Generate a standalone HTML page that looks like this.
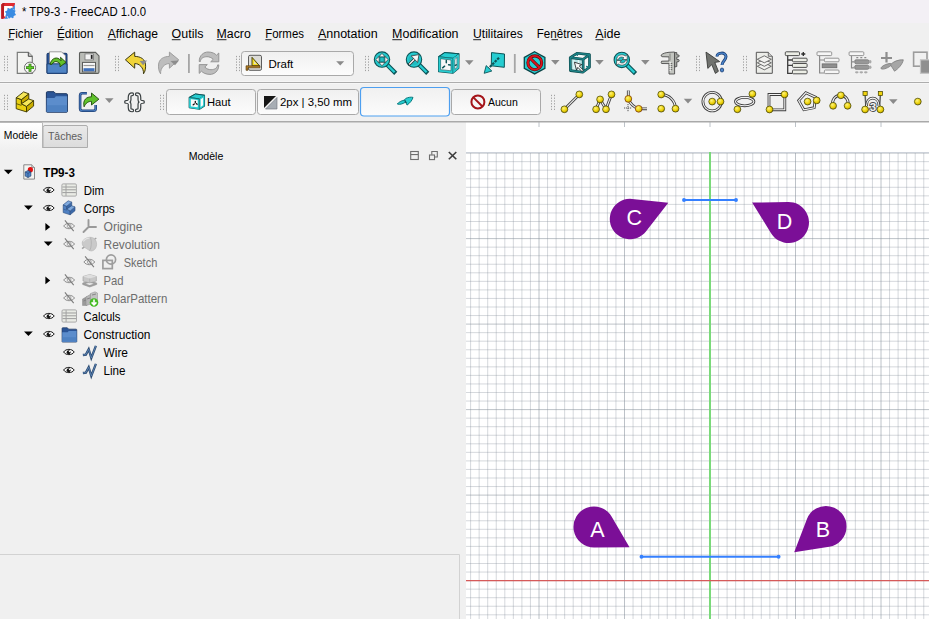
<!DOCTYPE html>
<html><head><meta charset="utf-8"><style>
html,body{margin:0;padding:0;background:#f0f0f0;overflow:hidden}
svg{display:block;font-family:"Liberation Sans", sans-serif}
</style></head><body>
<svg width="929" height="619" viewBox="0 0 929 619">
<rect x="0" y="0" width="929" height="619" fill="#f0f0f0"/><rect x="0" y="0" width="929" height="23" fill="#f3f0f5"/><rect x="466" y="122" width="463" height="497" fill="#ffffff"/><line x1="470.60" y1="152" x2="470.60" y2="619" stroke="#838c98" stroke-opacity="0.33" stroke-width="1"/><line x1="479.15" y1="152" x2="479.15" y2="619" stroke="#838c98" stroke-opacity="0.33" stroke-width="1"/><line x1="487.70" y1="152" x2="487.70" y2="619" stroke="#838c98" stroke-opacity="0.33" stroke-width="1"/><line x1="496.25" y1="152" x2="496.25" y2="619" stroke="#838c98" stroke-opacity="0.33" stroke-width="1"/><line x1="504.80" y1="152" x2="504.80" y2="619" stroke="#838c98" stroke-opacity="0.33" stroke-width="1"/><line x1="513.35" y1="152" x2="513.35" y2="619" stroke="#838c98" stroke-opacity="0.33" stroke-width="1"/><line x1="521.90" y1="152" x2="521.90" y2="619" stroke="#838c98" stroke-opacity="0.33" stroke-width="1"/><line x1="530.45" y1="152" x2="530.45" y2="619" stroke="#838c98" stroke-opacity="0.33" stroke-width="1"/><line x1="539.00" y1="152" x2="539.00" y2="619" stroke="#838c98" stroke-opacity="0.53" stroke-width="1"/><line x1="539.00" y1="122" x2="539.00" y2="127" stroke="#838c98" stroke-opacity="0.53" stroke-width="1"/><line x1="547.55" y1="152" x2="547.55" y2="619" stroke="#838c98" stroke-opacity="0.33" stroke-width="1"/><line x1="556.10" y1="152" x2="556.10" y2="619" stroke="#838c98" stroke-opacity="0.33" stroke-width="1"/><line x1="564.65" y1="152" x2="564.65" y2="619" stroke="#838c98" stroke-opacity="0.33" stroke-width="1"/><line x1="573.20" y1="152" x2="573.20" y2="619" stroke="#838c98" stroke-opacity="0.33" stroke-width="1"/><line x1="581.75" y1="152" x2="581.75" y2="619" stroke="#838c98" stroke-opacity="0.33" stroke-width="1"/><line x1="590.30" y1="152" x2="590.30" y2="619" stroke="#838c98" stroke-opacity="0.33" stroke-width="1"/><line x1="598.85" y1="152" x2="598.85" y2="619" stroke="#838c98" stroke-opacity="0.33" stroke-width="1"/><line x1="607.40" y1="152" x2="607.40" y2="619" stroke="#838c98" stroke-opacity="0.33" stroke-width="1"/><line x1="615.95" y1="152" x2="615.95" y2="619" stroke="#838c98" stroke-opacity="0.33" stroke-width="1"/><line x1="624.50" y1="152" x2="624.50" y2="619" stroke="#838c98" stroke-opacity="0.53" stroke-width="1"/><line x1="624.50" y1="122" x2="624.50" y2="127" stroke="#838c98" stroke-opacity="0.53" stroke-width="1"/><line x1="633.05" y1="152" x2="633.05" y2="619" stroke="#838c98" stroke-opacity="0.33" stroke-width="1"/><line x1="641.60" y1="152" x2="641.60" y2="619" stroke="#838c98" stroke-opacity="0.33" stroke-width="1"/><line x1="650.15" y1="152" x2="650.15" y2="619" stroke="#838c98" stroke-opacity="0.33" stroke-width="1"/><line x1="658.70" y1="152" x2="658.70" y2="619" stroke="#838c98" stroke-opacity="0.33" stroke-width="1"/><line x1="667.25" y1="152" x2="667.25" y2="619" stroke="#838c98" stroke-opacity="0.33" stroke-width="1"/><line x1="675.80" y1="152" x2="675.80" y2="619" stroke="#838c98" stroke-opacity="0.33" stroke-width="1"/><line x1="684.35" y1="152" x2="684.35" y2="619" stroke="#838c98" stroke-opacity="0.33" stroke-width="1"/><line x1="692.90" y1="152" x2="692.90" y2="619" stroke="#838c98" stroke-opacity="0.33" stroke-width="1"/><line x1="701.45" y1="152" x2="701.45" y2="619" stroke="#838c98" stroke-opacity="0.33" stroke-width="1"/><line x1="710.00" y1="152" x2="710.00" y2="619" stroke="#838c98" stroke-opacity="0.53" stroke-width="1"/><line x1="710.00" y1="122" x2="710.00" y2="127" stroke="#838c98" stroke-opacity="0.53" stroke-width="1"/><line x1="718.55" y1="152" x2="718.55" y2="619" stroke="#838c98" stroke-opacity="0.33" stroke-width="1"/><line x1="727.10" y1="152" x2="727.10" y2="619" stroke="#838c98" stroke-opacity="0.33" stroke-width="1"/><line x1="735.65" y1="152" x2="735.65" y2="619" stroke="#838c98" stroke-opacity="0.33" stroke-width="1"/><line x1="744.20" y1="152" x2="744.20" y2="619" stroke="#838c98" stroke-opacity="0.33" stroke-width="1"/><line x1="752.75" y1="152" x2="752.75" y2="619" stroke="#838c98" stroke-opacity="0.33" stroke-width="1"/><line x1="761.30" y1="152" x2="761.30" y2="619" stroke="#838c98" stroke-opacity="0.33" stroke-width="1"/><line x1="769.85" y1="152" x2="769.85" y2="619" stroke="#838c98" stroke-opacity="0.33" stroke-width="1"/><line x1="778.40" y1="152" x2="778.40" y2="619" stroke="#838c98" stroke-opacity="0.33" stroke-width="1"/><line x1="786.95" y1="152" x2="786.95" y2="619" stroke="#838c98" stroke-opacity="0.33" stroke-width="1"/><line x1="795.50" y1="152" x2="795.50" y2="619" stroke="#838c98" stroke-opacity="0.53" stroke-width="1"/><line x1="795.50" y1="122" x2="795.50" y2="127" stroke="#838c98" stroke-opacity="0.53" stroke-width="1"/><line x1="804.05" y1="152" x2="804.05" y2="619" stroke="#838c98" stroke-opacity="0.33" stroke-width="1"/><line x1="812.60" y1="152" x2="812.60" y2="619" stroke="#838c98" stroke-opacity="0.33" stroke-width="1"/><line x1="821.15" y1="152" x2="821.15" y2="619" stroke="#838c98" stroke-opacity="0.33" stroke-width="1"/><line x1="829.70" y1="152" x2="829.70" y2="619" stroke="#838c98" stroke-opacity="0.33" stroke-width="1"/><line x1="838.25" y1="152" x2="838.25" y2="619" stroke="#838c98" stroke-opacity="0.33" stroke-width="1"/><line x1="846.80" y1="152" x2="846.80" y2="619" stroke="#838c98" stroke-opacity="0.33" stroke-width="1"/><line x1="855.35" y1="152" x2="855.35" y2="619" stroke="#838c98" stroke-opacity="0.33" stroke-width="1"/><line x1="863.90" y1="152" x2="863.90" y2="619" stroke="#838c98" stroke-opacity="0.33" stroke-width="1"/><line x1="872.45" y1="152" x2="872.45" y2="619" stroke="#838c98" stroke-opacity="0.33" stroke-width="1"/><line x1="881.00" y1="152" x2="881.00" y2="619" stroke="#838c98" stroke-opacity="0.53" stroke-width="1"/><line x1="881.00" y1="122" x2="881.00" y2="127" stroke="#838c98" stroke-opacity="0.53" stroke-width="1"/><line x1="889.55" y1="152" x2="889.55" y2="619" stroke="#838c98" stroke-opacity="0.33" stroke-width="1"/><line x1="898.10" y1="152" x2="898.10" y2="619" stroke="#838c98" stroke-opacity="0.33" stroke-width="1"/><line x1="906.65" y1="152" x2="906.65" y2="619" stroke="#838c98" stroke-opacity="0.33" stroke-width="1"/><line x1="915.20" y1="152" x2="915.20" y2="619" stroke="#838c98" stroke-opacity="0.33" stroke-width="1"/><line x1="923.75" y1="152" x2="923.75" y2="619" stroke="#838c98" stroke-opacity="0.33" stroke-width="1"/><line x1="466" y1="153.10" x2="929" y2="153.10" stroke="#838c98" stroke-opacity="0.53" stroke-width="1"/><line x1="466" y1="161.65" x2="929" y2="161.65" stroke="#838c98" stroke-opacity="0.33" stroke-width="1"/><line x1="466" y1="170.20" x2="929" y2="170.20" stroke="#838c98" stroke-opacity="0.33" stroke-width="1"/><line x1="466" y1="178.75" x2="929" y2="178.75" stroke="#838c98" stroke-opacity="0.33" stroke-width="1"/><line x1="466" y1="187.30" x2="929" y2="187.30" stroke="#838c98" stroke-opacity="0.33" stroke-width="1"/><line x1="466" y1="195.85" x2="929" y2="195.85" stroke="#838c98" stroke-opacity="0.33" stroke-width="1"/><line x1="466" y1="204.40" x2="929" y2="204.40" stroke="#838c98" stroke-opacity="0.33" stroke-width="1"/><line x1="466" y1="212.95" x2="929" y2="212.95" stroke="#838c98" stroke-opacity="0.33" stroke-width="1"/><line x1="466" y1="221.50" x2="929" y2="221.50" stroke="#838c98" stroke-opacity="0.33" stroke-width="1"/><line x1="466" y1="230.05" x2="929" y2="230.05" stroke="#838c98" stroke-opacity="0.33" stroke-width="1"/><line x1="466" y1="238.60" x2="929" y2="238.60" stroke="#838c98" stroke-opacity="0.53" stroke-width="1"/><line x1="466" y1="247.15" x2="929" y2="247.15" stroke="#838c98" stroke-opacity="0.33" stroke-width="1"/><line x1="466" y1="255.70" x2="929" y2="255.70" stroke="#838c98" stroke-opacity="0.33" stroke-width="1"/><line x1="466" y1="264.25" x2="929" y2="264.25" stroke="#838c98" stroke-opacity="0.33" stroke-width="1"/><line x1="466" y1="272.80" x2="929" y2="272.80" stroke="#838c98" stroke-opacity="0.33" stroke-width="1"/><line x1="466" y1="281.35" x2="929" y2="281.35" stroke="#838c98" stroke-opacity="0.33" stroke-width="1"/><line x1="466" y1="289.90" x2="929" y2="289.90" stroke="#838c98" stroke-opacity="0.33" stroke-width="1"/><line x1="466" y1="298.45" x2="929" y2="298.45" stroke="#838c98" stroke-opacity="0.33" stroke-width="1"/><line x1="466" y1="307.00" x2="929" y2="307.00" stroke="#838c98" stroke-opacity="0.33" stroke-width="1"/><line x1="466" y1="315.55" x2="929" y2="315.55" stroke="#838c98" stroke-opacity="0.33" stroke-width="1"/><line x1="466" y1="324.10" x2="929" y2="324.10" stroke="#838c98" stroke-opacity="0.53" stroke-width="1"/><line x1="466" y1="332.65" x2="929" y2="332.65" stroke="#838c98" stroke-opacity="0.33" stroke-width="1"/><line x1="466" y1="341.20" x2="929" y2="341.20" stroke="#838c98" stroke-opacity="0.33" stroke-width="1"/><line x1="466" y1="349.75" x2="929" y2="349.75" stroke="#838c98" stroke-opacity="0.33" stroke-width="1"/><line x1="466" y1="358.30" x2="929" y2="358.30" stroke="#838c98" stroke-opacity="0.33" stroke-width="1"/><line x1="466" y1="366.85" x2="929" y2="366.85" stroke="#838c98" stroke-opacity="0.33" stroke-width="1"/><line x1="466" y1="375.40" x2="929" y2="375.40" stroke="#838c98" stroke-opacity="0.33" stroke-width="1"/><line x1="466" y1="383.95" x2="929" y2="383.95" stroke="#838c98" stroke-opacity="0.33" stroke-width="1"/><line x1="466" y1="392.50" x2="929" y2="392.50" stroke="#838c98" stroke-opacity="0.33" stroke-width="1"/><line x1="466" y1="401.05" x2="929" y2="401.05" stroke="#838c98" stroke-opacity="0.33" stroke-width="1"/><line x1="466" y1="409.60" x2="929" y2="409.60" stroke="#838c98" stroke-opacity="0.53" stroke-width="1"/><line x1="466" y1="418.15" x2="929" y2="418.15" stroke="#838c98" stroke-opacity="0.33" stroke-width="1"/><line x1="466" y1="426.70" x2="929" y2="426.70" stroke="#838c98" stroke-opacity="0.33" stroke-width="1"/><line x1="466" y1="435.25" x2="929" y2="435.25" stroke="#838c98" stroke-opacity="0.33" stroke-width="1"/><line x1="466" y1="443.80" x2="929" y2="443.80" stroke="#838c98" stroke-opacity="0.33" stroke-width="1"/><line x1="466" y1="452.35" x2="929" y2="452.35" stroke="#838c98" stroke-opacity="0.33" stroke-width="1"/><line x1="466" y1="460.90" x2="929" y2="460.90" stroke="#838c98" stroke-opacity="0.33" stroke-width="1"/><line x1="466" y1="469.45" x2="929" y2="469.45" stroke="#838c98" stroke-opacity="0.33" stroke-width="1"/><line x1="466" y1="478.00" x2="929" y2="478.00" stroke="#838c98" stroke-opacity="0.33" stroke-width="1"/><line x1="466" y1="486.55" x2="929" y2="486.55" stroke="#838c98" stroke-opacity="0.33" stroke-width="1"/><line x1="466" y1="495.10" x2="929" y2="495.10" stroke="#838c98" stroke-opacity="0.53" stroke-width="1"/><line x1="466" y1="503.65" x2="929" y2="503.65" stroke="#838c98" stroke-opacity="0.33" stroke-width="1"/><line x1="466" y1="512.20" x2="929" y2="512.20" stroke="#838c98" stroke-opacity="0.33" stroke-width="1"/><line x1="466" y1="520.75" x2="929" y2="520.75" stroke="#838c98" stroke-opacity="0.33" stroke-width="1"/><line x1="466" y1="529.30" x2="929" y2="529.30" stroke="#838c98" stroke-opacity="0.33" stroke-width="1"/><line x1="466" y1="537.85" x2="929" y2="537.85" stroke="#838c98" stroke-opacity="0.33" stroke-width="1"/><line x1="466" y1="546.40" x2="929" y2="546.40" stroke="#838c98" stroke-opacity="0.33" stroke-width="1"/><line x1="466" y1="554.95" x2="929" y2="554.95" stroke="#838c98" stroke-opacity="0.33" stroke-width="1"/><line x1="466" y1="563.50" x2="929" y2="563.50" stroke="#838c98" stroke-opacity="0.33" stroke-width="1"/><line x1="466" y1="572.05" x2="929" y2="572.05" stroke="#838c98" stroke-opacity="0.33" stroke-width="1"/><line x1="466" y1="580.60" x2="929" y2="580.60" stroke="#838c98" stroke-opacity="0.53" stroke-width="1"/><line x1="466" y1="589.15" x2="929" y2="589.15" stroke="#838c98" stroke-opacity="0.33" stroke-width="1"/><line x1="466" y1="597.70" x2="929" y2="597.70" stroke="#838c98" stroke-opacity="0.33" stroke-width="1"/><line x1="466" y1="606.25" x2="929" y2="606.25" stroke="#838c98" stroke-opacity="0.33" stroke-width="1"/><line x1="466" y1="614.80" x2="929" y2="614.80" stroke="#838c98" stroke-opacity="0.33" stroke-width="1"/><line x1="466" y1="152.5" x2="929" y2="152.5" stroke="#ccd1d9" stroke-width="1"/><line x1="710.0" y1="152" x2="710.0" y2="619" stroke="#7ad97a" stroke-width="2"/><line x1="466" y1="580.6" x2="929" y2="580.6" stroke="#d65a5a" stroke-width="1.3"/><line x1="684" y1="200.0" x2="736" y2="200.0" stroke="#3580ff" stroke-width="2.1"/><circle cx="684" cy="200.0" r="1.95" fill="#3580ff"/><circle cx="736" cy="200.0" r="1.95" fill="#3580ff"/><line x1="641.5" y1="556.8" x2="778.6" y2="556.8" stroke="#3580ff" stroke-width="2.1"/><circle cx="641.5" cy="556.8" r="1.95" fill="#3580ff"/><circle cx="778.6" cy="556.8" r="1.95" fill="#3580ff"/><path d="M668.30,202.70 L645.94,231.41 A20.2,20.2 0 1 1 632.10,198.91 Z" fill="#7b0f97"/><path d="M752.10,202.60 L788.16,202.00 A20.5,20.5 0 1 1 771.06,233.28 Z" fill="#7b0f97"/><path d="M629.50,547.20 L594.17,547.50 A20.5,20.5 0 1 1 611.71,516.68 Z" fill="#7b0f97"/><path d="M794.20,552.20 L806.86,519.17 A20.5,20.5 0 1 1 829.15,546.76 Z" fill="#7b0f97"/><text x="634.2" y="225.2" font-size="21.5" fill="#ffffff" font-weight="normal" text-anchor="middle" >C</text><text x="784.6" y="229" font-size="21.5" fill="#ffffff" font-weight="normal" text-anchor="middle" >D</text><text x="597.5" y="537" font-size="21.5" fill="#ffffff" font-weight="normal" text-anchor="middle" >A</text><text x="823" y="537" font-size="21.5" fill="#ffffff" font-weight="normal" text-anchor="middle" >B</text><rect x="0" y="81" width="929" height="1" fill="#f6f6f6"/><rect x="0" y="82" width="929" height="1" fill="#adadad"/><rect x="0" y="83" width="929" height="1" fill="#f6f6f6"/><rect x="0" y="121" width="929" height="1.5" fill="#a9a9a9"/><text x="22" y="16.1" font-size="12" fill="#000" font-weight="normal" text-anchor="start" textLength="124" lengthAdjust="spacingAndGlyphs" >* TP9-3 - FreeCAD 1.0.0</text><text x="8.200000000000001" y="38.0" font-size="12.3" fill="#000" font-weight="normal" text-anchor="start" textLength="34.8" lengthAdjust="spacingAndGlyphs" >Fichier</text><text x="56.9" y="38.0" font-size="12.3" fill="#000" font-weight="normal" text-anchor="start" textLength="36.5" lengthAdjust="spacingAndGlyphs" >Édition</text><text x="107.7" y="38.0" font-size="12.3" fill="#000" font-weight="normal" text-anchor="start" textLength="50.2" lengthAdjust="spacingAndGlyphs" >Affichage</text><text x="171.6" y="38.0" font-size="12.3" fill="#000" font-weight="normal" text-anchor="start" textLength="31.8" lengthAdjust="spacingAndGlyphs" >Outils</text><text x="216.6" y="38.0" font-size="12.3" fill="#000" font-weight="normal" text-anchor="start" textLength="34.2" lengthAdjust="spacingAndGlyphs" >Macro</text><text x="265.2" y="38.0" font-size="12.3" fill="#000" font-weight="normal" text-anchor="start" textLength="38.8" lengthAdjust="spacingAndGlyphs" >Formes</text><text x="318.0" y="38.0" font-size="12.3" fill="#000" font-weight="normal" text-anchor="start" textLength="59.6" lengthAdjust="spacingAndGlyphs" >Annotation</text><text x="392.09999999999997" y="38.0" font-size="12.3" fill="#000" font-weight="normal" text-anchor="start" textLength="66.4" lengthAdjust="spacingAndGlyphs" >Modification</text><text x="473.0" y="38.0" font-size="12.3" fill="#000" font-weight="normal" text-anchor="start" textLength="49.9" lengthAdjust="spacingAndGlyphs" >Utilitaires</text><text x="536.8" y="38.0" font-size="12.3" fill="#000" font-weight="normal" text-anchor="start" textLength="45.7" lengthAdjust="spacingAndGlyphs" >Fenêtres</text><text x="595.3" y="38.0" font-size="12.3" fill="#000" font-weight="normal" text-anchor="start" textLength="25.1" lengthAdjust="spacingAndGlyphs" >Aide</text><rect x="7.9" y="39.2" width="6.1" height="1" fill="#222"/><rect x="57.2" y="39.2" width="6.3" height="1" fill="#222"/><rect x="107.9" y="39.2" width="8.1" height="1" fill="#222"/><rect x="171.8" y="39.2" width="8.7" height="1" fill="#222"/><rect x="216.8" y="39.2" width="9.7" height="1" fill="#222"/><rect x="265.4" y="39.2" width="6.1" height="1" fill="#222"/><rect x="318.2" y="39.2" width="8.3" height="1" fill="#222"/><rect x="392.3" y="39.2" width="9.7" height="1" fill="#222"/><rect x="473.2" y="39.2" width="7.8" height="1" fill="#222"/><rect x="551.5" y="39.2" width="6.5" height="1" fill="#222"/><rect x="595.5" y="39.2" width="8.0" height="1" fill="#222"/><defs><radialGradient id="ydot" cx="0.4" cy="0.35" r="0.7"><stop offset="0" stop-color="#fff27a"/><stop offset="0.6" stop-color="#ecd20a"/><stop offset="1" stop-color="#b89c00"/></radialGradient></defs><g><path d="M1.3,18.7 V4.6 L3,2.9 H14.9 V5 L12.6,8.2 H4.1 V16.3 L6.2,16.3 L4.2,18.7 Z" fill="#e02a31"/><path d="M1.3,18.7 V4.6 L3,2.9 H5 L4.1,4.6 V16.3 L3,18.7 Z" fill="#b71c22"/><path d="M4.1,5.9 H12.6 V8.3 H7 V10.3 H9.2 V12.4 H7 V16.3 H4.1 Z" fill="#ffffff"/><path d="M14.9,4.6 V10 L11.5,9 L12.6,8.2 Z M4.2,18.7 L6.6,15.8 L8,18.7 Z" fill="#3a8be2"/><path d="M11.59,7.81 L12.62,8.13 L12.96,9.55 L13.62,10.10 L15.08,10.16 L15.59,11.11 L14.82,12.36 L14.90,13.22 L15.89,14.29 L15.57,15.32 L14.15,15.66 L13.60,16.32 L13.54,17.78 L12.59,18.29 L11.34,17.52 L10.48,17.60 L9.41,18.59 L8.38,18.27 L8.04,16.85 L7.38,16.30 L5.92,16.24 L5.41,15.29 L6.18,14.04 L6.10,13.18 L5.11,12.11 L5.43,11.08 L6.85,10.74 L7.40,10.08 L7.46,8.62 L8.41,8.11 L9.66,8.88 L10.52,8.80 Z" fill="#3a8be2"/></g><rect x="4" y="55.90" width="1" height="1.3" fill="#a2a2a2"/><rect x="7" y="55.90" width="1" height="1.3" fill="#a2a2a2"/><rect x="4" y="58.68" width="1" height="1.3" fill="#a2a2a2"/><rect x="7" y="58.68" width="1" height="1.3" fill="#a2a2a2"/><rect x="4" y="61.46" width="1" height="1.3" fill="#a2a2a2"/><rect x="7" y="61.46" width="1" height="1.3" fill="#a2a2a2"/><rect x="4" y="64.24" width="1" height="1.3" fill="#a2a2a2"/><rect x="7" y="64.24" width="1" height="1.3" fill="#a2a2a2"/><rect x="4" y="67.02" width="1" height="1.3" fill="#a2a2a2"/><rect x="7" y="67.02" width="1" height="1.3" fill="#a2a2a2"/><rect x="4" y="69.80" width="1" height="1.3" fill="#a2a2a2"/><rect x="7" y="69.80" width="1" height="1.3" fill="#a2a2a2"/><rect x="115" y="55.90" width="1" height="1.3" fill="#a2a2a2"/><rect x="118" y="55.90" width="1" height="1.3" fill="#a2a2a2"/><rect x="115" y="58.68" width="1" height="1.3" fill="#a2a2a2"/><rect x="118" y="58.68" width="1" height="1.3" fill="#a2a2a2"/><rect x="115" y="61.46" width="1" height="1.3" fill="#a2a2a2"/><rect x="118" y="61.46" width="1" height="1.3" fill="#a2a2a2"/><rect x="115" y="64.24" width="1" height="1.3" fill="#a2a2a2"/><rect x="118" y="64.24" width="1" height="1.3" fill="#a2a2a2"/><rect x="115" y="67.02" width="1" height="1.3" fill="#a2a2a2"/><rect x="118" y="67.02" width="1" height="1.3" fill="#a2a2a2"/><rect x="115" y="69.80" width="1" height="1.3" fill="#a2a2a2"/><rect x="118" y="69.80" width="1" height="1.3" fill="#a2a2a2"/><rect x="236" y="55.90" width="1" height="1.3" fill="#a2a2a2"/><rect x="239" y="55.90" width="1" height="1.3" fill="#a2a2a2"/><rect x="236" y="58.68" width="1" height="1.3" fill="#a2a2a2"/><rect x="239" y="58.68" width="1" height="1.3" fill="#a2a2a2"/><rect x="236" y="61.46" width="1" height="1.3" fill="#a2a2a2"/><rect x="239" y="61.46" width="1" height="1.3" fill="#a2a2a2"/><rect x="236" y="64.24" width="1" height="1.3" fill="#a2a2a2"/><rect x="239" y="64.24" width="1" height="1.3" fill="#a2a2a2"/><rect x="236" y="67.02" width="1" height="1.3" fill="#a2a2a2"/><rect x="239" y="67.02" width="1" height="1.3" fill="#a2a2a2"/><rect x="236" y="69.80" width="1" height="1.3" fill="#a2a2a2"/><rect x="239" y="69.80" width="1" height="1.3" fill="#a2a2a2"/><rect x="365" y="55.90" width="1" height="1.3" fill="#a2a2a2"/><rect x="368" y="55.90" width="1" height="1.3" fill="#a2a2a2"/><rect x="365" y="58.68" width="1" height="1.3" fill="#a2a2a2"/><rect x="368" y="58.68" width="1" height="1.3" fill="#a2a2a2"/><rect x="365" y="61.46" width="1" height="1.3" fill="#a2a2a2"/><rect x="368" y="61.46" width="1" height="1.3" fill="#a2a2a2"/><rect x="365" y="64.24" width="1" height="1.3" fill="#a2a2a2"/><rect x="368" y="64.24" width="1" height="1.3" fill="#a2a2a2"/><rect x="365" y="67.02" width="1" height="1.3" fill="#a2a2a2"/><rect x="368" y="67.02" width="1" height="1.3" fill="#a2a2a2"/><rect x="365" y="69.80" width="1" height="1.3" fill="#a2a2a2"/><rect x="368" y="69.80" width="1" height="1.3" fill="#a2a2a2"/><rect x="696" y="55.90" width="1" height="1.3" fill="#a2a2a2"/><rect x="699" y="55.90" width="1" height="1.3" fill="#a2a2a2"/><rect x="696" y="58.68" width="1" height="1.3" fill="#a2a2a2"/><rect x="699" y="58.68" width="1" height="1.3" fill="#a2a2a2"/><rect x="696" y="61.46" width="1" height="1.3" fill="#a2a2a2"/><rect x="699" y="61.46" width="1" height="1.3" fill="#a2a2a2"/><rect x="696" y="64.24" width="1" height="1.3" fill="#a2a2a2"/><rect x="699" y="64.24" width="1" height="1.3" fill="#a2a2a2"/><rect x="696" y="67.02" width="1" height="1.3" fill="#a2a2a2"/><rect x="699" y="67.02" width="1" height="1.3" fill="#a2a2a2"/><rect x="696" y="69.80" width="1" height="1.3" fill="#a2a2a2"/><rect x="699" y="69.80" width="1" height="1.3" fill="#a2a2a2"/><rect x="743" y="55.90" width="1" height="1.3" fill="#a2a2a2"/><rect x="746" y="55.90" width="1" height="1.3" fill="#a2a2a2"/><rect x="743" y="58.68" width="1" height="1.3" fill="#a2a2a2"/><rect x="746" y="58.68" width="1" height="1.3" fill="#a2a2a2"/><rect x="743" y="61.46" width="1" height="1.3" fill="#a2a2a2"/><rect x="746" y="61.46" width="1" height="1.3" fill="#a2a2a2"/><rect x="743" y="64.24" width="1" height="1.3" fill="#a2a2a2"/><rect x="746" y="64.24" width="1" height="1.3" fill="#a2a2a2"/><rect x="743" y="67.02" width="1" height="1.3" fill="#a2a2a2"/><rect x="746" y="67.02" width="1" height="1.3" fill="#a2a2a2"/><rect x="743" y="69.80" width="1" height="1.3" fill="#a2a2a2"/><rect x="746" y="69.80" width="1" height="1.3" fill="#a2a2a2"/><g transform="translate(16.8,51.8)">
<path d="M0.5,0.5 H11.5 L15.5,4.5 V21.5 H0.5 Z" fill="#f3f3f1" stroke="#7a7c7a" stroke-width="1.2"/>
<path d="M11.5,0.5 V4.5 H15.5" fill="#c9cac8" stroke="#4a4a4a" stroke-width="1"/>
<circle cx="13.2" cy="15.9" r="5.6" fill="#f6f6f6" stroke="#707070" stroke-width="1"/>
<path d="M13.2,11.9 V19.9 M9.2,15.9 H17.2" stroke="#2f6d10" stroke-width="2.8"/>
<path d="M13.2,12.4 V19.4 M9.7,15.9 H16.7" stroke="#5fcf28" stroke-width="1.4"/>
</g><g transform="translate(46.5,51.8)">
<rect x="0.5" y="1.5" width="20" height="20" rx="1" fill="#2a5599" stroke="#163566" stroke-width="1"/>
<path d="M3,0 H15 L19,4 V14 H3 Z" fill="#fbfbfb" stroke="#888" stroke-width="0.8"/>
<path d="M0.5,12 H20.5 V21.5 H0.5 Z" fill="#4f84c4" stroke="#1d3f73" stroke-width="1"/>
<path d="M3.5,12.5 C5,6 11,4 14.5,9 L14,5.5 L19.5,10.5 L13.5,15 L13.5,12 C11,9.5 8,8.5 5.5,12.5 Z" fill="#62c02a" stroke="#1e4a08" stroke-width="0.9"/>
</g><g transform="translate(79,51.9)">
<path d="M1.5,0.5 H16.5 L20,4 V20 Q20,21.5 18.5,21.5 H1.5 Q0.5,21.5 0.5,20.5 V1.5 Q0.5,0.5 1.5,0.5 Z" fill="#b9bbb6" stroke="#5b5d5a" stroke-width="1.1"/>
<rect x="6" y="2" width="8.5" height="6" fill="#f4f4f4" stroke="#777" stroke-width="0.8"/>
<rect x="11.8" y="3" width="1.8" height="4" fill="#222"/>
<rect x="3.5" y="10.5" width="13" height="9.5" fill="#f7f7f7" stroke="#5b5d5a" stroke-width="1"/>
<rect x="4.5" y="13" width="11" height="1.2" fill="#9a9a9a"/>
<rect x="4.5" y="16.3" width="11" height="3" fill="#3f70bb"/>
</g><g transform="translate(125.1,51.8)">
<path d="M0.3,8 L9.6,0.3 V4.6 C15,4.6 21,7 20.5,15 C20.3,18.5 19.5,20.5 18.4,22 C18.8,16 14,11.5 9.6,11.8 V16.4 Z" fill="#f0d43a" stroke="#3d3a12" stroke-width="1"/>
<path d="M14.5,9.2 L22,8.8 L18,13.5 Z" fill="#8d8d8d"/>
</g><g transform="translate(157,51.8)">
<path d="M21.7,8 L12.4,0.3 V4.6 C7,4.6 1,7 1.5,15 C1.7,18.5 2.5,20.5 3.6,22 C3.2,16 8,11.5 12.4,11.8 V16.4 Z" fill="#bdbdbd" stroke="#9e9e9e" stroke-width="1"/>
<path d="M13.5,9.2 L22,8.8 L18,13.5 Z" fill="#8d8d8d"/>
</g><rect x="188.0" y="54" width="1.8" height="19" fill="#a6a6a6"/><g transform="translate(196,50)">
<path d="M3.2,11.5 C3.2,5 8,2 12,2 C16,2 19,3.5 20.5,5.2 L22.8,3 V11.8 H14.7 L17.2,9.4 C15.5,7.5 13,6.7 11,6.7 C7.5,6.7 4.5,8.5 4.4,11.5 Z" fill="#bdbdbd" stroke="#8e8e8e" stroke-width="0.9"/>
<path d="M3.2,11.5 C3.2,5 8,2 12,2 C16,2 19,3.5 20.5,5.2 L22.8,3 V11.8 H14.7 L17.2,9.4 C15.5,7.5 13,6.7 11,6.7 C7.5,6.7 4.5,8.5 4.4,11.5 Z" fill="#bdbdbd" stroke="#8e8e8e" stroke-width="0.9" transform="rotate(180 13 13.2)"/>
</g><defs><linearGradient id="btng" x1="0" y1="0" x2="0" y2="1"><stop offset="0" stop-color="#fdfdfd"/><stop offset="1" stop-color="#efefef"/></linearGradient>
<linearGradient id="btng2" x1="0" y1="0" x2="0" y2="1"><stop offset="0" stop-color="#f0f0f0"/><stop offset="1" stop-color="#fcfcfc"/></linearGradient></defs>
<rect x="241.5" y="51.5" width="112" height="24" rx="3" fill="url(#btng2)" stroke="#a9a9a9" stroke-width="1"/><g transform="translate(246,54.8)">
<rect x="2.5" y="0.5" width="13" height="15" rx="1.5" fill="#dcdcd8" stroke="#5d5d5d" stroke-width="1"/>
<path d="M6,2.5 L6,11 L13.5,11 Z" fill="#f2de2a" stroke="#3a3400" stroke-width="0.9"/>
<path d="M8,6.5 V9.3 H10.6 Z" fill="#dcdcd8"/>
<path d="M0,11 H14 V13 H2 V15.5 H0 Z" fill="#b07d2a" stroke="#4a3000" stroke-width="0.6"/>
</g><text x="268.4" y="67.8" font-size="11.5" fill="#000" font-weight="normal" text-anchor="start" >Draft</text><path d="M336.2,61.199999999999996 L344.2,61.199999999999996 L340.2,65.6 Z" fill="#8a8a8a"/><g transform="translate(373.8,51.2)">
<path d="M13.2,13.4 L20.4,20.6" stroke="#0c5457" stroke-width="4.4" stroke-linecap="square"/>
<path d="M13.6,13.8 L20,20.2" stroke="#26cdd1" stroke-width="2.4" stroke-linecap="square"/>
<circle cx="8.2" cy="8.4" r="7.7" fill="#26cdd1" stroke="#0c5457" stroke-width="1.1"/>
<circle cx="8.2" cy="8.4" r="5.6" fill="#1aa7ab" opacity="0.45"/>
<path d="M8.2,2.2 L11.2,5.6 H5.2 Z M8.2,14.6 L11.2,11.2 H5.2 Z M1.9,8.4 L5.3,5.4 V11.4 Z M14.5,8.4 L11.1,5.4 V11.4 Z" fill="#f7f7f7" stroke="#2a2a2a" stroke-width="0.6" stroke-linejoin="round"/>
<rect x="6.2" y="6.4" width="4" height="4" fill="#22c0c4" stroke="#0c5457" stroke-width="0.4"/>
</g><g transform="translate(405.8,51.2)">
<path d="M13.2,13.4 L20.4,20.6" stroke="#0c5457" stroke-width="4.4" stroke-linecap="square"/>
<path d="M13.6,13.8 L20,20.2" stroke="#26cdd1" stroke-width="2.4" stroke-linecap="square"/>
<circle cx="8.2" cy="8.4" r="7.7" fill="#26cdd1" stroke="#0c5457" stroke-width="1.1"/>
<circle cx="8.2" cy="8.4" r="5.6" fill="#1aa7ab" opacity="0.45"/>
<path d="M3.6,13 L8.6,8" stroke="#2a2a2a" stroke-width="2.8" stroke-linecap="round"/><path d="M3.8,12.8 L8.8,7.8" stroke="#f7f7f7" stroke-width="1.4" stroke-linecap="round"/>
<path d="M13.2,3.4 L11.8,11.2 L5.4,4.8 Z" fill="#f7f7f7" stroke="#2a2a2a" stroke-width="0.7" stroke-linejoin="round"/>
</g><g transform="translate(437.8,51.8)">
<path d="M0.8,5 L7,0.8 L21.2,2 L21,16.5 L15,21.4 L0.8,19.8 Z" fill="#f8f8f8" stroke="#0c5457" stroke-width="1.2" stroke-linejoin="round"/>
<path d="M0.8,5 L7,0.8 L21.2,2 L15.2,6.5 Z" fill="#26cdd1" stroke="#0c5457" stroke-width="1" stroke-linejoin="round"/>
<path d="M1.8,5.9 L14.2,7.2 V20.3 L1.8,18.9 Z" fill="none" stroke="#26cdd1" stroke-width="2"/>
<path d="M16,6.9 L20.2,3.9 V16 L16,19.6 Z" fill="none" stroke="#26cdd1" stroke-width="1.6"/>
<path d="M0.8,5 L15,6.5 V21.4 M2.8,6.9 V17.8 L13.2,19 V8.2 Z M17,8 V17.6 L19.2,15.6 V5.6 Z" fill="none" stroke="#0c5457" stroke-width="0.6"/>
<path d="M8.5,8.6 V11 M4.8,16 L6.8,14.4 M10.8,13 L12.5,13.3 M17.5,13.5 L18.5,13" stroke="#0c5457" stroke-width="1.5" stroke-linecap="round"/>
</g><path d="M465.05,60.2625 L473.55,60.2625 L469.3,64.9375 Z" fill="#8a8a8a"/><g transform="translate(484,51.8)">
<path d="M7.5,0.8 L20.5,2.2 L20.3,15.5 L7.3,14 Z" fill="#26cdd1" stroke="#0c5457" stroke-width="1"/>
<path d="M15,6 L4.5,16.5" stroke="#0c5457" stroke-width="2.2" stroke-dasharray="2.5,1"/>
<path d="M0.2,21.5 L2.2,13.8 L7.8,19.2 Z" fill="#26cdd1" stroke="#0c5457" stroke-width="0.9"/>
</g><rect x="513.9" y="54" width="1.8" height="19" fill="#a6a6a6"/><g transform="translate(523.6,51.2)">
<path d="M11,0.6 L21.3,6.3 V17.1 L11,22.7 L0.7,17.1 V6.3 Z" fill="#26cdd1" stroke="#0a4447" stroke-width="1.3"/>
<circle cx="11.2" cy="11.6" r="6.9" fill="none" stroke="#5a0808" stroke-width="3.1"/>
<path d="M6.4,6.8 L16,16.4" stroke="#5a0808" stroke-width="3.1"/>
<circle cx="11.2" cy="11.6" r="6.9" fill="none" stroke="#d8141e" stroke-width="1.9"/>
<path d="M6.4,6.8 L16,16.4" stroke="#d8141e" stroke-width="1.9"/>
</g><path d="M551.05,60.0625 L559.55,60.0625 L555.3,64.7375 Z" fill="#8a8a8a"/><g>
<path d="M570.2,57.6 L583.2,59.2 V72.3 L570.4,70.6 Z" fill="#b5e3e4"/>
<path d="M583.2,59.2 L589.5,54.6 V67.2 L582.8,72.3 Z" fill="#f4f8f8"/>
<path d="M570.2,57.6 L577.3,53.2 L589.5,54.6 L583.2,59.2 Z" fill="#f4f8f8"/>
<path d="M574,58.5 V70.5 M578.5,59 V71.5" stroke="#e6f6f6" stroke-width="1.4"/>
<path d="M570.2,57.6 L577.3,53.2 L589.5,54.6 V67.2 L582.8,72.3 L570.4,70.6 Z M570.2,57.6 L583.2,59.2 L589.5,54.6 M583.2,59.2 V72.3" fill="none" stroke="#0b4446" stroke-width="2.6" stroke-linejoin="round"/>
<path d="M570.2,57.6 L577.3,53.2 L589.5,54.6 V67.2 L582.8,72.3 L570.4,70.6 Z M570.2,57.6 L583.2,59.2 L589.5,54.6 M583.2,59.2 V72.3" fill="none" stroke="#1d8286" stroke-width="1.5" stroke-linejoin="round"/>
<path d="M577.3,53.2 V56 M589.5,67.2 L586,66.5" stroke="#1d8286" stroke-width="1.3"/>
<path d="M574.4,62.2 L581.8,64.6 L579.2,66 L583.4,70.2 L582,71.6 L577.8,67.4 L576.5,70 Z" fill="#f8f8f8" stroke="#1a1a1a" stroke-width="0.8" stroke-linejoin="round"/>
</g><path d="M595.25,60.0625 L603.75,60.0625 L599.5,64.7375 Z" fill="#8a8a8a"/><g transform="translate(613.6,51.5)">
<path d="M13.2,13.4 L20.4,20.6" stroke="#0c5457" stroke-width="4.4" stroke-linecap="square"/>
<path d="M13.6,13.8 L20,20.2" stroke="#26cdd1" stroke-width="2.4" stroke-linecap="square"/>
<circle cx="8.2" cy="8.4" r="7.7" fill="#26cdd1" stroke="#0c5457" stroke-width="1.1"/>
<circle cx="8.2" cy="8.4" r="5.6" fill="#1aa7ab" opacity="0.45"/>
<path d="M3,8.2 C3,3.5 8.5,2 12,4.6 L13.6,3 V8 H8.6 L10.4,6.3 C8,4.8 5,5.6 4.8,8.2 Z" fill="#f7f7f7" stroke="#2a2a2a" stroke-width="0.6" stroke-linejoin="round"/>
<path d="M3,8.2 C3,3.5 8.5,2 12,4.6 L13.6,3 V8 H8.6 L10.4,6.3 C8,4.8 5,5.6 4.8,8.2 Z" fill="#f7f7f7" stroke="#2a2a2a" stroke-width="0.6" stroke-linejoin="round" transform="rotate(180 8.3 8.5)"/>
</g><path d="M641.05,60.0625 L649.55,60.0625 L645.3,64.7375 Z" fill="#8a8a8a"/><g>
<path d="M661.2,55 C663,53.2 666,52.6 669,52.3 L674.6,52 V74 H669 V63.6 L661.6,63.5 Q660.8,62.2 661.6,61.2 L669,61 V56.9 L662,56.7 Q660.8,56 661.2,55 Z" fill="#c3c5c0" stroke="#4c4c4c" stroke-width="0.9" stroke-linejoin="round"/>
<path d="M674.6,52.6 H676.8 V54.8 L678.8,55 Q679.6,55.9 678.8,56.8 L676.8,57.2 V59.4 L678.8,59.6 Q679.6,60.6 678.8,61.6 L676.8,61.9 V66.5 L674.6,67 Z" fill="#a9aba6" stroke="#4c4c4c" stroke-width="0.9" stroke-linejoin="round"/>
<path d="M669.4,62.5 H671 M669.4,64.6 H671 M669.4,66.6 H671 M669.4,68.6 H671 M669.4,70.6 H671" stroke="#f4f4f4" stroke-width="0.8"/>
<path d="M671.2,63.5 H672.2 M671.2,65.6 H672.2 M671.2,67.6 H672.2 M671.2,69.6 H672.2" stroke="#333" stroke-width="0.8"/>
<path d="M670,53.5 V60.5" stroke="#9a9c97" stroke-width="1.6"/>
</g><g transform="translate(705.2,51.8)">
<path d="M0.8,0.3 L14.5,9.8 L9.6,10.6 L13.2,19.5 L10.2,21.6 L6.6,12.8 L2.6,16.6 Z" fill="#70726e" stroke="#3b3c3a" stroke-width="0.9"/>
<path d="M11.8,4.6 C11.8,0.6 20.8,-0.2 20.8,4.8 C20.8,8.6 16.8,9.2 16.8,13.2" fill="none" stroke="#1c3f73" stroke-width="3"/>
<path d="M11.8,4.6 C11.8,0.6 20.8,-0.2 20.8,4.8 C20.8,8.6 16.8,9.2 16.8,13.2" fill="none" stroke="#4a83c9" stroke-width="1.4"/>
<ellipse cx="16.8" cy="18.2" rx="1.7" ry="2" fill="#4a83c9" stroke="#1c3f73" stroke-width="0.8"/>
</g><g transform="translate(755.8,51.8)">
<path d="M0.5,0.5 H12.5 L16.5,4.5 V21.5 H0.5 Z" fill="#ecede9" stroke="#555" stroke-width="1"/>
<path d="M12.5,0.5 V4.5 H16.5" fill="#ccc" stroke="#555" stroke-width="0.8"/>
<path d="M1.5,14.5 L8.5,11 L15.5,14.5 L8.5,18 Z" fill="#f2f2f0" stroke="#4d4d4d" stroke-width="0.8"/>
<path d="M1.5,11 L8.5,7.5 L15.5,11 L8.5,14.5 Z" fill="#f2f2f0" stroke="#4d4d4d" stroke-width="0.8"/>
<path d="M1.5,7.5 L8.5,4 L15.5,7.5 L8.5,11 Z" fill="#f2f2f0" stroke="#4d4d4d" stroke-width="0.8"/>
</g><g transform="translate(784.8,51.8)"><path d="M2.9,4 V21.5 H7.7 M2.9,8.2 H7.7 M2.9,13.6 H7.7" fill="none" stroke="#3d3d3d" stroke-width="1.3"/><rect x="0.5" y="0" width="14.2" height="3.8" rx="0.9" fill="#eceee6" stroke="#3d3d3d" stroke-width="0.9"/><path d="M18.5,0.2 V4.2 M16.5,2.2 H20.5" stroke="#2a2a2a" stroke-width="1.3"/><rect x="7.7" y="6.4" width="14.6" height="3.6" rx="0.9" fill="#eceee6" stroke="#3d3d3d" stroke-width="0.9"/><rect x="7.7" y="11.7" width="14.6" height="3.9" rx="0.9" fill="#eceee6" stroke="#3d3d3d" stroke-width="0.9"/><rect x="7.7" y="18.2" width="14.6" height="3.8" rx="0.9" fill="#eceee6" stroke="#3d3d3d" stroke-width="0.9"/></g><g transform="translate(816,51.8)"><path d="M3.6,4 V21.2 H8.4 M3.6,8.2 H8.4" fill="none" stroke="#8a8a8a" stroke-width="1.2"/><rect x="1" y="0" width="14.7" height="3.8" rx="0.9" fill="#f6f6f6" stroke="#8a8a8a" stroke-width="0.9"/><rect x="8.4" y="6.4" width="14.6" height="3.6" rx="0.9" fill="#f6f6f6" stroke="#8a8a8a" stroke-width="0.9"/><rect x="6.2" y="12.1" width="14.6" height="3.8" fill="#8f8f8f" stroke="#6f6f6f" stroke-width="0.9"/><rect x="8.4" y="18.2" width="14.6" height="3.6" rx="0.9" fill="#f6f6f6" stroke="#8a8a8a" stroke-width="0.9"/></g><g transform="translate(848.3,51.8)"><path d="M3.2,4 V16 H5.5 M3.2,10 H5.5" fill="none" stroke="#8a8a8a" stroke-width="1.2"/><rect x="0.8" y="0" width="14.7" height="3.8" rx="0.9" fill="#f6f6f6" stroke="#8a8a8a" stroke-width="0.9"/><path d="M8,5.8 H10 M12,5.8 H14 M16,5.8 H18" stroke="#8a8a8a" stroke-width="1.4"/><rect x="6.5" y="8" width="14" height="4" rx="1.2" fill="#989898" stroke="#777" stroke-width="0.8"/><ellipse cx="21.8" cy="10" rx="1.4" ry="1.7" fill="#aaa"/><path d="M4.5,10 L6.5,8.8 V11.2 Z" fill="#999"/><rect x="6.5" y="13.5" width="14" height="4" rx="1.2" fill="#989898" stroke="#777" stroke-width="0.8"/><ellipse cx="21.8" cy="15.5" rx="1.4" ry="1.7" fill="#aaa"/><path d="M4.5,15.5 L6.5,14.3 V16.7 Z" fill="#999"/><ellipse cx="8.5" cy="20.5" rx="1.8" ry="1.1" fill="#aaa"/><ellipse cx="13" cy="20.5" rx="1.8" ry="1.1" fill="#aaa"/><ellipse cx="17.5" cy="20.5" rx="1.8" ry="1.1" fill="#aaa"/></g><g>
<path d="M886.5,52 V62.5 M881,58 H892" stroke="#8e8e8e" stroke-width="2.2"/>
<path d="M881.2,68.8 C880,67.5 884,64.5 889,63.6 C891,63.2 892,63.6 891.5,65 C889,67.5 883.5,70 881.2,68.8 Z" fill="#a0a0a0" stroke="#7c7c7c" stroke-width="0.8"/>
<path d="M890.5,64.8 C893,61.5 898.5,59.5 903.3,59.8 C902.5,64.5 898,69 894.5,71.2 Z" fill="#a6a6a6" stroke="#7c7c7c" stroke-width="0.8"/>
</g><g>
<rect x="913.6" y="52.2" width="13.4" height="14" fill="none" stroke="#9c9c9c" stroke-width="1.6"/>
<rect x="920.5" y="59.8" width="12" height="13.5" fill="#8f8f8f" stroke="#c4c4c4" stroke-width="1.2"/>
</g><rect x="4" y="94.80" width="1" height="1.3" fill="#a2a2a2"/><rect x="7" y="94.80" width="1" height="1.3" fill="#a2a2a2"/><rect x="4" y="97.58" width="1" height="1.3" fill="#a2a2a2"/><rect x="7" y="97.58" width="1" height="1.3" fill="#a2a2a2"/><rect x="4" y="100.36" width="1" height="1.3" fill="#a2a2a2"/><rect x="7" y="100.36" width="1" height="1.3" fill="#a2a2a2"/><rect x="4" y="103.14" width="1" height="1.3" fill="#a2a2a2"/><rect x="7" y="103.14" width="1" height="1.3" fill="#a2a2a2"/><rect x="4" y="105.92" width="1" height="1.3" fill="#a2a2a2"/><rect x="7" y="105.92" width="1" height="1.3" fill="#a2a2a2"/><rect x="4" y="108.70" width="1" height="1.3" fill="#a2a2a2"/><rect x="7" y="108.70" width="1" height="1.3" fill="#a2a2a2"/><rect x="160" y="94.80" width="1" height="1.3" fill="#a2a2a2"/><rect x="163" y="94.80" width="1" height="1.3" fill="#a2a2a2"/><rect x="160" y="97.58" width="1" height="1.3" fill="#a2a2a2"/><rect x="163" y="97.58" width="1" height="1.3" fill="#a2a2a2"/><rect x="160" y="100.36" width="1" height="1.3" fill="#a2a2a2"/><rect x="163" y="100.36" width="1" height="1.3" fill="#a2a2a2"/><rect x="160" y="103.14" width="1" height="1.3" fill="#a2a2a2"/><rect x="163" y="103.14" width="1" height="1.3" fill="#a2a2a2"/><rect x="160" y="105.92" width="1" height="1.3" fill="#a2a2a2"/><rect x="163" y="105.92" width="1" height="1.3" fill="#a2a2a2"/><rect x="160" y="108.70" width="1" height="1.3" fill="#a2a2a2"/><rect x="163" y="108.70" width="1" height="1.3" fill="#a2a2a2"/><rect x="551" y="94.80" width="1" height="1.3" fill="#a2a2a2"/><rect x="554" y="94.80" width="1" height="1.3" fill="#a2a2a2"/><rect x="551" y="97.58" width="1" height="1.3" fill="#a2a2a2"/><rect x="554" y="97.58" width="1" height="1.3" fill="#a2a2a2"/><rect x="551" y="100.36" width="1" height="1.3" fill="#a2a2a2"/><rect x="554" y="100.36" width="1" height="1.3" fill="#a2a2a2"/><rect x="551" y="103.14" width="1" height="1.3" fill="#a2a2a2"/><rect x="554" y="103.14" width="1" height="1.3" fill="#a2a2a2"/><rect x="551" y="105.92" width="1" height="1.3" fill="#a2a2a2"/><rect x="554" y="105.92" width="1" height="1.3" fill="#a2a2a2"/><rect x="551" y="108.70" width="1" height="1.3" fill="#a2a2a2"/><rect x="554" y="108.70" width="1" height="1.3" fill="#a2a2a2"/><g>
<path d="M16.2,97.7 L21.4,99.6 V103.8 L26.5,106.4 V111.9 L16.2,108.7 Z" fill="#e8cf12" stroke="#3a3500" stroke-width="0.9" stroke-linejoin="round"/>
<path d="M21.4,99.6 L28.8,93.8 V99.2 L21.4,103.8 Z" fill="#c9ad00" stroke="#3a3500" stroke-width="0.9" stroke-linejoin="round"/>
<path d="M26.5,106.4 L33.6,100.6 V106.1 L26.5,111.9 Z" fill="#c9ad00" stroke="#3a3500" stroke-width="0.9" stroke-linejoin="round"/>
<path d="M16.2,97.7 L23.6,91.9 L28.8,93.8 L21.4,99.6 Z" fill="#f6e85a" stroke="#3a3500" stroke-width="0.9" stroke-linejoin="round"/>
<path d="M21.4,103.8 L28.6,99 L33.6,100.6 L26.5,106.4 Z" fill="#f6e85a" stroke="#3a3500" stroke-width="0.9" stroke-linejoin="round"/>
<path d="M16.2,103.6 L21.4,105.4" stroke="#3a3500" stroke-width="0.7200000000000001"/>
</g><g transform="translate(45.9,91.2) scale(1.0)">
<path d="M0.5,1.5 Q0.5,0.5 1.5,0.5 H8 L10,2.5 H20.5 Q21.5,2.5 21.5,3.5 V20.3 Q21.5,21 20.8,21 H1.2 Q0.5,21 0.5,20.3 Z" fill="#2b5597" stroke="#1b355f" stroke-width="1"/>
<path d="M0.8,6.8 H8.5 L10,5 H21.2 V20.7 H0.8 Z" fill="#5c8dcc"/>
<path d="M0.8,14 H21.2 V20.7 H0.8 Z" fill="#4a7dbd" opacity="0.7"/>
</g><g transform="translate(78.9,92)">
<path d="M8,1.2 H3.5 Q1.2,1.2 1.2,3.5 V16.5 Q1.2,18.8 3.5,18.8 H14.5 Q16.8,18.8 16.8,16.5 V13" fill="none" stroke="#1d3e73" stroke-width="2.6"/>
<path d="M8,1.2 H3.5 Q1.2,1.2 1.2,3.5 V16.5 Q1.2,18.8 3.5,18.8 H14.5 Q16.8,18.8 16.8,16.5 V13" fill="none" stroke="#4c7fc2" stroke-width="1.1"/>
<path d="M5.2,14.8 C3.5,7.5 8,4.8 12.6,4.8 V1 L20,7.2 L12.6,13 V9.4 C9.8,9.2 6.8,10.8 5.2,14.8 Z" fill="#5fc12b" stroke="#1f4a0a" stroke-width="0.9" stroke-linejoin="round"/>
</g><path d="M105.05,98.26249999999999 L113.55,98.26249999999999 L109.3,102.9375 Z" fill="#8a8a8a"/><g transform="translate(120,88)">
<path d="M12.2,6.2 C9.8,6.2 9.6,7.2 9.6,9.5 V11.8 C9.6,13.2 8.6,13.9 6,13.9 C8.6,13.9 9.6,14.6 9.6,16.2 V19.5 C9.6,21.8 9.8,22.4 12.2,22.4 M16.8,6.2 C19.2,6.2 19.4,7.2 19.4,9.5 V11.8 C19.4,13.2 20.4,13.9 23,13.9 C20.4,13.9 19.4,14.6 19.4,16.2 V19.5 C19.4,21.8 19.2,22.4 16.8,22.4" fill="none" stroke="#3a4042" stroke-width="3.9" stroke-linejoin="round" stroke-linecap="round"/>
<path d="M12.2,6.2 C9.8,6.2 9.6,7.2 9.6,9.5 V11.8 C9.6,13.2 8.6,13.9 6,13.9 C8.6,13.9 9.6,14.6 9.6,16.2 V19.5 C9.6,21.8 9.8,22.4 12.2,22.4 M16.8,6.2 C19.2,6.2 19.4,7.2 19.4,9.5 V11.8 C19.4,13.2 20.4,13.9 23,13.9 C20.4,13.9 19.4,14.6 19.4,16.2 V19.5 C19.4,21.8 19.2,22.4 16.8,22.4" fill="none" stroke="#f7f7f7" stroke-width="1.5" stroke-linejoin="round" stroke-linecap="round"/>
</g><defs><linearGradient id="btng" x1="0" y1="0" x2="0" y2="1"><stop offset="0" stop-color="#fdfdfd"/><stop offset="1" stop-color="#efefef"/></linearGradient>
<linearGradient id="btng2" x1="0" y1="0" x2="0" y2="1"><stop offset="0" stop-color="#f0f0f0"/><stop offset="1" stop-color="#fcfcfc"/></linearGradient></defs>
<rect x="166.5" y="89.5" width="89" height="25" rx="3" fill="url(#btng2)" stroke="#a9a9a9" stroke-width="1"/><g>
<path d="M189.2,97.5 L195.5,94 L204.5,95.3 V106 L199.5,109.2 L189.2,107.6 Z" fill="#fafafa" stroke="#0c4f52" stroke-width="1.1" stroke-linejoin="round"/>
<path d="M189.2,97.5 L195.5,94 L204.5,95.3 L199.3,98.9 Z" fill="#26cdd1" stroke="#0c4f52" stroke-width="0.9" stroke-linejoin="round"/>
<path d="M190,98.2 L198.6,99.4 V108.4 L190,107 Z" fill="none" stroke="#26cdd1" stroke-width="1.7"/>
<path d="M200,98.9 L203.8,96.4 V105.6 L200,108.2 Z" fill="none" stroke="#26cdd1" stroke-width="1.3"/>
<path d="M199.3,98.9 V109.2 M189.2,97.5 L199.3,98.9" fill="none" stroke="#0c4f52" stroke-width="0.7"/>
<path d="M193.2,104.8 L194.3,103.9 M195.3,101.3 V102.4 M196.2,103.6 L197.2,104.2" stroke="#111" stroke-width="1.3" stroke-linecap="round"/>
</g><text x="207" y="105.9" font-size="11.5" fill="#000" font-weight="normal" text-anchor="start" textLength="23.6" lengthAdjust="spacingAndGlyphs" >Haut</text><defs><linearGradient id="btng" x1="0" y1="0" x2="0" y2="1"><stop offset="0" stop-color="#fdfdfd"/><stop offset="1" stop-color="#efefef"/></linearGradient>
<linearGradient id="btng2" x1="0" y1="0" x2="0" y2="1"><stop offset="0" stop-color="#f0f0f0"/><stop offset="1" stop-color="#fcfcfc"/></linearGradient></defs>
<rect x="257.5" y="89.5" width="101" height="25" rx="3" fill="url(#btng2)" stroke="#a9a9a9" stroke-width="1"/><g transform="translate(264,96)">
<path d="M0,0 H12 L0,12 Z" fill="#161616"/>
<path d="M13,1.5 V13 H1.5 Z" fill="#a7adb4" stroke="#6b7078" stroke-width="0.6"/>
</g><text x="280" y="105.9" font-size="11.5" fill="#000" font-weight="normal" text-anchor="start" textLength="72" lengthAdjust="spacingAndGlyphs" >2px | 3,50 mm</text><rect x="360.5" y="87.5" width="89" height="28.5" rx="3.5" fill="url(#btng2)" stroke="#4d9ff0" stroke-width="1.2"/><g transform="translate(397,96.8)">
<path d="M0.3,7.2 C1.5,5.5 4.5,3.8 7.2,3.4 L8.8,1.6 C11,0.6 14,0 16,0.6 C15.3,3.3 13.2,6 10,8.3 L8.8,5.2 C6.3,6.8 2.8,8.2 0.3,7.2 Z" fill="#26cdd1" stroke="#0f7a7e" stroke-width="1"/>
<path d="M7.6,3.3 L9.3,6.2" stroke="#0c5457" stroke-width="1.2"/>
</g><defs><linearGradient id="btng" x1="0" y1="0" x2="0" y2="1"><stop offset="0" stop-color="#fdfdfd"/><stop offset="1" stop-color="#efefef"/></linearGradient>
<linearGradient id="btng2" x1="0" y1="0" x2="0" y2="1"><stop offset="0" stop-color="#f0f0f0"/><stop offset="1" stop-color="#fcfcfc"/></linearGradient></defs>
<rect x="451.5" y="89.5" width="89" height="25" rx="3" fill="url(#btng2)" stroke="#a9a9a9" stroke-width="1"/><circle cx="477.9" cy="101.9" r="6.5" fill="none" stroke="#a4151a" stroke-width="2.0"/><path d="M473.35,97.35 L482.45,106.45" stroke="#a4151a" stroke-width="2.0"/><text x="488" y="105.9" font-size="11.5" fill="#000" font-weight="normal" text-anchor="start" textLength="29.8" lengthAdjust="spacingAndGlyphs" >Aucun</text><path d="M564.4,109.3 L579.3,94.4" fill="none" stroke="#3c3c3c" stroke-width="2.8"/><path d="M564.4,109.3 L579.3,94.4" fill="none" stroke="#f4f4f4" stroke-width="1.1"/><circle cx="564.4" cy="109.3" r="3.4" fill="url(#ydot)" stroke="#3d3d00" stroke-width="0.7"/><circle cx="579.3" cy="94.4" r="3.4" fill="url(#ydot)" stroke="#3d3d00" stroke-width="0.7"/><path d="M596.1,109.3 L600.1,99.4 L606,109.3 L611.5,94.4" fill="none" stroke="#3c3c3c" stroke-width="2.8"/><path d="M596.1,109.3 L600.1,99.4 L606,109.3 L611.5,94.4" fill="none" stroke="#f4f4f4" stroke-width="1.1"/><circle cx="596.1" cy="109.3" r="3.4" fill="url(#ydot)" stroke="#3d3d00" stroke-width="0.7"/><circle cx="606" cy="109.3" r="3.4" fill="url(#ydot)" stroke="#3d3d00" stroke-width="0.7"/><circle cx="600.1" cy="99.4" r="3.4" fill="url(#ydot)" stroke="#3d3d00" stroke-width="0.7"/><circle cx="611.5" cy="94.4" r="3.4" fill="url(#ydot)" stroke="#3d3d00" stroke-width="0.7"/><path d="M628.3,90.5 V99 Q631,106 638.7,108.8 H647" fill="none" stroke="#3c3c3c" stroke-width="2.8"/><path d="M628.3,90.5 V99 Q631,106 638.7,108.8 H647" fill="none" stroke="#f4f4f4" stroke-width="1.1"/><path d="M628,104 V112 M624,108 H632" stroke="#555" stroke-width="1" stroke-dasharray="1.2,0.8"/><circle cx="628.3" cy="98.9" r="3.4" fill="url(#ydot)" stroke="#7a2a00" stroke-width="0.7"/><circle cx="638.7" cy="108.8" r="3.4" fill="url(#ydot)" stroke="#7a2a00" stroke-width="0.7"/><path d="M661.2,94.5 A14.3,14.2 0 0 1 675.5,108.7" fill="none" stroke="#3c3c3c" stroke-width="2.8"/><path d="M661.2,94.5 A14.3,14.2 0 0 1 675.5,108.7" fill="none" stroke="#f4f4f4" stroke-width="1.1"/><circle cx="661.2" cy="94.5" r="3.4" fill="url(#ydot)" stroke="#3d3d00" stroke-width="0.7"/><circle cx="661.2" cy="108.7" r="3.4" fill="url(#ydot)" stroke="#3d3d00" stroke-width="0.7"/><circle cx="675.5" cy="108.7" r="3.4" fill="url(#ydot)" stroke="#3d3d00" stroke-width="0.7"/><path d="M683.75,98.8625 L692.25,98.8625 L688,103.53750000000001 Z" fill="#8a8a8a"/><circle cx="712.2" cy="101.6" r="9.3" fill="none" stroke="#3c3c3c" stroke-width="2.8"/><circle cx="712.2" cy="101.6" r="9.3" fill="none" stroke="#f4f4f4" stroke-width="1.1"/><circle cx="712.2" cy="101.6" r="3.4" fill="url(#ydot)" stroke="#3d3d00" stroke-width="0.7"/><circle cx="720.5" cy="101.6" r="3.4" fill="url(#ydot)" stroke="#3d3d00" stroke-width="0.7"/><ellipse cx="744.7" cy="101.6" rx="9.2" ry="4.2" fill="none" stroke="#3c3c3c" stroke-width="2.8"/><ellipse cx="744.7" cy="101.6" rx="9.2" ry="4.2" fill="none" stroke="#f4f4f4" stroke-width="1.1"/><circle cx="752.4" cy="93.9" r="3.4" fill="url(#ydot)" stroke="#3d3d00" stroke-width="0.7"/><circle cx="737.4" cy="109.3" r="3.4" fill="url(#ydot)" stroke="#3d3d00" stroke-width="0.7"/><path d="M769,94.5 H784.8 V109.8 H769 Z" fill="none" stroke="#3c3c3c" stroke-width="2.8"/><path d="M769,94.5 H784.8 V109.8 H769 Z" fill="none" stroke="#f4f4f4" stroke-width="1.1"/><circle cx="769.5" cy="109.5" r="3.4" fill="url(#ydot)" stroke="#3d3d00" stroke-width="0.7"/><circle cx="784.5" cy="94.4" r="3.4" fill="url(#ydot)" stroke="#3d3d00" stroke-width="0.7"/><path d="M805.81,92.78 L815.44,97.17 L814.23,107.69 L803.86,109.79 L798.66,100.57 Z" fill="none" stroke="#3c3c3c" stroke-width="2.8"/><path d="M805.81,92.78 L815.44,97.17 L814.23,107.69 L803.86,109.79 L798.66,100.57 Z" fill="none" stroke="#f4f4f4" stroke-width="1.1"/><circle cx="807.6" cy="101.6" r="3.4" fill="url(#ydot)" stroke="#3d3d00" stroke-width="0.7"/><circle cx="816.7" cy="100.4" r="3.4" fill="url(#ydot)" stroke="#3d3d00" stroke-width="0.7"/><path d="M833.1,105.8 A7.76,7.76 0 1 1 847.6,105.8" fill="none" stroke="#3c3c3c" stroke-width="2.8"/><path d="M833.1,105.8 A7.76,7.76 0 1 1 847.6,105.8" fill="none" stroke="#f4f4f4" stroke-width="1.1"/><circle cx="840.9" cy="95.3" r="3.4" fill="url(#ydot)" stroke="#3d3d00" stroke-width="0.7"/><circle cx="833.1" cy="105.8" r="3.4" fill="url(#ydot)" stroke="#3d3d00" stroke-width="0.7"/><circle cx="847.6" cy="105.8" r="3.4" fill="url(#ydot)" stroke="#3d3d00" stroke-width="0.7"/><path d="M865.1,95 L866,108 M880.4,95 L879.5,108" stroke="#5d6060" stroke-width="1.5" fill="none"/><path d="M866.5,106 C866.5,95.5 879,95.5 879,106" fill="none" stroke="#3c3c3c" stroke-width="2.8"/><path d="M866.5,106 C866.5,95.5 879,95.5 879,106" fill="none" stroke="#f4f4f4" stroke-width="1.1"/><rect x="863" y="91.4" width="4.2" height="4.2" fill="#f1d40f" stroke="#3d3d00" stroke-width="0.7"/><rect x="878.3" y="91.4" width="4.2" height="4.2" fill="#f1d40f" stroke="#3d3d00" stroke-width="0.7"/><text x="873" y="111.3" font-size="11.5" font-weight="bold" fill="#f2f2f2" stroke="#4a4d4e" stroke-width="1.8" paint-order="stroke" text-anchor="middle">3</text><circle cx="865.1" cy="109.5" r="3.4" fill="url(#ydot)" stroke="#3d3d00" stroke-width="0.7"/><circle cx="880.4" cy="109.5" r="3.4" fill="url(#ydot)" stroke="#3d3d00" stroke-width="0.7"/><path d="M889.05,99.26249999999999 L897.55,99.26249999999999 L893.3,103.9375 Z" fill="#8a8a8a"/><circle cx="917.8" cy="101.6" r="3.4" fill="url(#ydot)" stroke="#3d3d00" stroke-width="0.7"/><defs><linearGradient id="tabg" x1="0" y1="0" x2="0" y2="1"><stop offset="0" stop-color="#ffffff"/><stop offset="1" stop-color="#f0f0f0"/></linearGradient></defs><rect x="0" y="122.5" width="42.5" height="28" fill="url(#tabg)"/><path d="M0,122.5 H42.5 V148" fill="none" stroke="#b9b9b9" stroke-width="1"/><defs><linearGradient id="tab2" x1="0" y1="0" x2="0" y2="1"><stop offset="0" stop-color="#e9e9e9"/><stop offset="1" stop-color="#dcdcdc"/></linearGradient></defs><path d="M43,147.5 V127.5 Q43,125.5 45,125.5 H86 Q87.5,125.5 87.5,127.5 V147.5 Z" fill="url(#tab2)" stroke="#adadad" stroke-width="1"/><text x="3.8" y="138.5" font-size="11.5" fill="#000" font-weight="normal" text-anchor="start" textLength="34" lengthAdjust="spacingAndGlyphs" >Modèle</text><text x="47.9" y="140.2" font-size="11.5" fill="#5e5e5e" font-weight="normal" text-anchor="start" textLength="34.4" lengthAdjust="spacingAndGlyphs" >Tâches</text><text x="188.7" y="159.9" font-size="11.5" fill="#000" font-weight="normal" text-anchor="start" textLength="34.6" lengthAdjust="spacingAndGlyphs" >Modèle</text><rect x="410.7" y="151.5" width="7.6" height="8" fill="none" stroke="#6e6e6e" stroke-width="1.1"/><rect x="410.7" y="154" width="7.6" height="1.1" fill="#6e6e6e"/><rect x="429.5" y="155" width="5" height="4.6" fill="none" stroke="#6e6e6e" stroke-width="1.1"/><path d="M431.8,154.8 V151.5 H437.3 V157 H434.6" fill="none" stroke="#6e6e6e" stroke-width="1.1"/><path d="M448.8,152 L456.3,159.3 M456.3,152 L448.8,159.3" stroke="#3c3c3c" stroke-width="1.6"/><path d="M3.9000000000000004,169.8 H12.700000000000001 L8.3,174.3 Z" fill="#000"/><g transform="translate(23.3,164.3)">
<path d="M0.5,0.5 H8.5 L11.2,3.2 V14.8 H0.5 Z" fill="#f4f4f2" stroke="#7d7d7d" stroke-width="0.9"/>
<path d="M8.5,0.5 V3.2 H11.2" fill="#d0d0d0" stroke="#7d7d7d" stroke-width="0.7"/>
<circle cx="7.1" cy="5.4" r="2.6" fill="#e31010"/>
<path d="M1.9,7.6 L4.7,6.2 L7.6,7.6 V11.8 L4.7,13.3 L1.9,11.8 Z" fill="#4f84c6" stroke="#1b3560" stroke-width="0.6"/>
<path d="M1.9,7.6 L4.7,9 L7.6,7.6 M4.7,9 V13.3" fill="none" stroke="#1b3560" stroke-width="0.5"/>
</g><text x="43.3" y="177.0" font-size="12.4" fill="#000" font-weight="bold" text-anchor="start" textLength="31.6" lengthAdjust="spacingAndGlyphs" >TP9-3</text><g transform="translate(42.8,186)">
<path d="M0.7,4 C3,0.5 9,0.5 11.3,4 C9,7.5 3,7.5 0.7,4 Z" fill="#fafafa" stroke="#141414" stroke-width="1.0"/>
<circle cx="5.7" cy="4.3" r="1.95" fill="#141414"/><circle cx="6.6" cy="3.5" r="0.7" fill="#f4f4f4"/>
</g><g transform="translate(61.4,183.4)"><rect x="0.5" y="0.5" width="14.5" height="12.2" rx="1.2" fill="#e9ebe5" stroke="#a9a9a9" stroke-width="1"/><path d="M1,3.6 H14.5" stroke="#9d9d9d" stroke-width="1"/><path d="M1,6.4 H14.5" stroke="#9d9d9d" stroke-width="1"/><path d="M1,9.2 H14.5" stroke="#9d9d9d" stroke-width="1"/><path d="M4.6,0.8 V12.5" stroke="#a2a2a2" stroke-width="1"/></g><text x="83.7" y="195.1" font-size="12.4" fill="#000" font-weight="normal" text-anchor="start" textLength="20.3" lengthAdjust="spacingAndGlyphs" >Dim</text><path d="M24.0,205.60000000000002 H32.8 L28.4,210.10000000000002 Z" fill="#000"/><g transform="translate(42.8,204)">
<path d="M0.7,4 C3,0.5 9,0.5 11.3,4 C9,7.5 3,7.5 0.7,4 Z" fill="#fafafa" stroke="#141414" stroke-width="1.0"/>
<circle cx="5.7" cy="4.3" r="1.95" fill="#141414"/><circle cx="6.6" cy="3.5" r="0.7" fill="#f4f4f4"/>
</g><g transform="translate(63.2,200.8) scale(0.6782,0.7000) translate(-16.2,-91.9)"><g>
<path d="M16.2,97.7 L21.4,99.6 V103.8 L26.5,106.4 V111.9 L16.2,108.7 Z" fill="#4f80c2" stroke="#2a4c7e" stroke-width="0.9" stroke-linejoin="round"/>
<path d="M21.4,99.6 L28.8,93.8 V99.2 L21.4,103.8 Z" fill="#3a68a8" stroke="#2a4c7e" stroke-width="0.9" stroke-linejoin="round"/>
<path d="M26.5,106.4 L33.6,100.6 V106.1 L26.5,111.9 Z" fill="#3a68a8" stroke="#2a4c7e" stroke-width="0.9" stroke-linejoin="round"/>
<path d="M16.2,97.7 L23.6,91.9 L28.8,93.8 L21.4,99.6 Z" fill="#7fa9de" stroke="#2a4c7e" stroke-width="0.9" stroke-linejoin="round"/>
<path d="M21.4,103.8 L28.6,99 L33.6,100.6 L26.5,106.4 Z" fill="#7fa9de" stroke="#2a4c7e" stroke-width="0.9" stroke-linejoin="round"/>
<path d="M16.2,103.6 L21.4,105.4" stroke="#2a4c7e" stroke-width="0.7200000000000001"/>
</g></g><text x="83.7" y="213.1" font-size="12.4" fill="#000" font-weight="normal" text-anchor="start" textLength="31" lengthAdjust="spacingAndGlyphs" >Corps</text><path d="M45.400000000000006,223.1 L50.2,226.9 L45.400000000000006,230.70000000000002 Z" fill="#000"/><g transform="translate(63.1,222)">
<path d="M0.6,4 C3,0.4 9,0.4 11.4,4 C9,7.6 3,7.6 0.6,4 Z" fill="none" stroke="#8c8c8c" stroke-width="1"/>
<circle cx="6" cy="4" r="1.9" fill="none" stroke="#a0a0a0" stroke-width="0.9"/>
<path d="M1.8,-1.6 L10.6,9.2" stroke="#7a7a7a" stroke-width="1.05"/>
</g><g transform="translate(82.5,219.5)">
<path d="M6,7.5 V0.5 M6,7.5 H13.5 M6,7.5 L1,12.5" stroke="#9a9a9a" stroke-width="1.9" stroke-linecap="round"/>
</g><text x="103.5" y="231.1" font-size="12.4" fill="#6d6d6d" font-weight="normal" text-anchor="start" textLength="39" lengthAdjust="spacingAndGlyphs" >Origine</text><path d="M43.800000000000004,241.60000000000002 H52.6 L48.2,246.10000000000002 Z" fill="#000"/><g transform="translate(63.1,240)">
<path d="M0.6,4 C3,0.4 9,0.4 11.4,4 C9,7.6 3,7.6 0.6,4 Z" fill="none" stroke="#8c8c8c" stroke-width="1"/>
<circle cx="6" cy="4" r="1.9" fill="none" stroke="#a0a0a0" stroke-width="0.9"/>
<path d="M1.8,-1.6 L10.6,9.2" stroke="#7a7a7a" stroke-width="1.05"/>
</g><g>
<path d="M82,248.6 L84.5,246.8 M94.3,239.5 L96.3,238" stroke="#a3a3a3" stroke-width="1.5"/>
<path d="M82.3,242 C83,239.5 86.5,237.3 89.8,237.3 C92,237.3 93.5,237.8 94.2,238.8 C95.8,240 96.7,242 96.6,244.5 C96.5,247 95.5,249.5 93,250.6 C91.8,251.1 90.5,251 89.6,250.6 L84,247 C82.6,246 82,244 82.3,242 Z" fill="#cacaca" stroke="#b3b3b3" stroke-width="0.6"/>
<path d="M89.6,250.6 C91.5,248 92,241 90.5,237.6" fill="none" stroke="#b0b0b0" stroke-width="0.8"/>
<path d="M83.2,241.5 C84.5,239.5 87,238.2 89.5,238" fill="none" stroke="#e4e4e4" stroke-width="1.1"/>
</g><text x="103.5" y="249.1" font-size="12.4" fill="#6d6d6d" font-weight="normal" text-anchor="start" textLength="56.5" lengthAdjust="spacingAndGlyphs" >Revolution</text><g transform="translate(83.3,258)">
<path d="M0.6,4 C3,0.4 9,0.4 11.4,4 C9,7.6 3,7.6 0.6,4 Z" fill="none" stroke="#8c8c8c" stroke-width="1"/>
<circle cx="6" cy="4" r="1.9" fill="none" stroke="#a0a0a0" stroke-width="0.9"/>
<path d="M1.8,-1.6 L10.6,9.2" stroke="#7a7a7a" stroke-width="1.05"/>
</g><g transform="translate(102,255)">
<rect x="0.9" y="5.4" width="9.4" height="8.2" fill="none" stroke="#9d9d9d" stroke-width="1.7"/>
<circle cx="9" cy="4.5" r="4.6" fill="none" stroke="#9d9d9d" stroke-width="1.7"/>
</g><text x="123.7" y="267.1" font-size="12.4" fill="#6d6d6d" font-weight="normal" text-anchor="start" textLength="33.6" lengthAdjust="spacingAndGlyphs" >Sketch</text><path d="M45.400000000000006,276.59999999999997 L50.2,280.4 L45.400000000000006,284.2 Z" fill="#000"/><g transform="translate(63.1,276)">
<path d="M0.6,4 C3,0.4 9,0.4 11.4,4 C9,7.6 3,7.6 0.6,4 Z" fill="none" stroke="#8c8c8c" stroke-width="1"/>
<circle cx="6" cy="4" r="1.9" fill="none" stroke="#a0a0a0" stroke-width="0.9"/>
<path d="M1.8,-1.6 L10.6,9.2" stroke="#7a7a7a" stroke-width="1.05"/>
</g><g transform="translate(82.2,273.5)">
<path d="M0.5,9.5 L7.5,7.5 L14.5,9.5 V11 L7.5,13.5 L0.5,11 Z" fill="#9e9e9e" stroke="#888" stroke-width="0.5"/>
<path d="M3.5,10.3 L7.5,9.2 L11.5,10.3 L7.5,11.5 Z" fill="#f0f0f0"/>
<path d="M0.8,3 L7.5,1 L14.2,3 V7.5 L7.5,9.5 L0.8,7.5 Z" fill="#c7c7c7" stroke="#a0a0a0" stroke-width="0.6"/>
<path d="M0.8,3 L7.5,5 L14.2,3 L7.5,1 Z" fill="#dedede"/><path d="M7.5,5 V9.5" stroke="#a8a8a8" stroke-width="0.6"/>
</g><text x="103.5" y="285.1" font-size="12.4" fill="#6d6d6d" font-weight="normal" text-anchor="start" textLength="20" lengthAdjust="spacingAndGlyphs" >Pad</text><g transform="translate(63.1,294)">
<path d="M0.6,4 C3,0.4 9,0.4 11.4,4 C9,7.6 3,7.6 0.6,4 Z" fill="none" stroke="#8c8c8c" stroke-width="1"/>
<circle cx="6" cy="4" r="1.9" fill="none" stroke="#a0a0a0" stroke-width="0.9"/>
<path d="M1.8,-1.6 L10.6,9.2" stroke="#7a7a7a" stroke-width="1.05"/>
</g><g transform="translate(82,291)">
<path d="M0.5,8 L5,5.5 V14.5 H0.5 Z" fill="#9a9a9a" stroke="#8a8a8a" stroke-width="0.5"/>
<path d="M4,6 L9,3 V13 L4,14.5 Z" fill="#b5b5b5" stroke="#8a8a8a" stroke-width="0.5"/>
<path d="M8.5,2.5 L13,0.8 L15.5,2 V10 L8.5,12 Z" fill="#c2c2c2" stroke="#8f8f8f" stroke-width="0.5"/>
<path d="M10,4 L14,3 M1.5,10 L4,9 M5,8 L8,7" stroke="#808080" stroke-width="0.9"/>
<circle cx="12" cy="11.5" r="4.3" fill="#44bb22"/>
<path d="M12,8.6 V13.6 M9.6,11.4 L12,13.9 L14.4,11.4" fill="none" stroke="#fff" stroke-width="1.6"/>
</g><text x="103.5" y="303.1" font-size="12.4" fill="#6d6d6d" font-weight="normal" text-anchor="start" textLength="63.8" lengthAdjust="spacingAndGlyphs" >PolarPattern</text><g transform="translate(42.9,312)">
<path d="M0.7,4 C3,0.5 9,0.5 11.3,4 C9,7.5 3,7.5 0.7,4 Z" fill="#fafafa" stroke="#141414" stroke-width="1.0"/>
<circle cx="5.7" cy="4.3" r="1.95" fill="#141414"/><circle cx="6.6" cy="3.5" r="0.7" fill="#f4f4f4"/>
</g><g transform="translate(61.5,309.4)"><rect x="0.5" y="0.5" width="14.5" height="12.2" rx="1.2" fill="#e9ebe5" stroke="#a9a9a9" stroke-width="1"/><path d="M1,3.6 H14.5" stroke="#9d9d9d" stroke-width="1"/><path d="M1,6.4 H14.5" stroke="#9d9d9d" stroke-width="1"/><path d="M1,9.2 H14.5" stroke="#9d9d9d" stroke-width="1"/><path d="M4.6,0.8 V12.5" stroke="#a2a2a2" stroke-width="1"/></g><text x="83.5" y="321.1" font-size="12.4" fill="#000" font-weight="normal" text-anchor="start" textLength="37" lengthAdjust="spacingAndGlyphs" >Calculs</text><path d="M24.0,331.6 H32.8 L28.4,336.1 Z" fill="#000"/><g transform="translate(42.9,330)">
<path d="M0.7,4 C3,0.5 9,0.5 11.3,4 C9,7.5 3,7.5 0.7,4 Z" fill="#fafafa" stroke="#141414" stroke-width="1.0"/>
<circle cx="5.7" cy="4.3" r="1.95" fill="#141414"/><circle cx="6.6" cy="3.5" r="0.7" fill="#f4f4f4"/>
</g><g transform="translate(61.7,327.4) scale(0.7)">
<path d="M0.5,1.5 Q0.5,0.5 1.5,0.5 H8 L10,2.5 H20.5 Q21.5,2.5 21.5,3.5 V20.3 Q21.5,21 20.8,21 H1.2 Q0.5,21 0.5,20.3 Z" fill="#2b5597" stroke="#1b355f" stroke-width="1"/>
<path d="M0.8,6.8 H8.5 L10,5 H21.2 V20.7 H0.8 Z" fill="#5c8dcc"/>
<path d="M0.8,14 H21.2 V20.7 H0.8 Z" fill="#4a7dbd" opacity="0.7"/>
</g><text x="83.5" y="339.1" font-size="12.4" fill="#000" font-weight="normal" text-anchor="start" textLength="67" lengthAdjust="spacingAndGlyphs" >Construction</text><g transform="translate(62.9,348)">
<path d="M0.7,4 C3,0.5 9,0.5 11.3,4 C9,7.5 3,7.5 0.7,4 Z" fill="#fafafa" stroke="#141414" stroke-width="1.0"/>
<circle cx="5.7" cy="4.3" r="1.95" fill="#141414"/><circle cx="6.6" cy="3.5" r="0.7" fill="#f4f4f4"/>
</g><g transform="translate(82.1,345)">
<path d="M0.8,10 L3.8,9.6 L6.6,4.2 L9.2,13 L13.8,0.8" fill="none" stroke="#2a4a70" stroke-width="2.3" stroke-linejoin="miter"/>
<path d="M0.8,10 L3.8,9.6 L6.6,4.2 L9.2,13 L13.8,0.8" fill="none" stroke="#5d84b6" stroke-width="0.9" stroke-linejoin="miter"/>
</g><text x="103.5" y="357.1" font-size="12.4" fill="#000" font-weight="normal" text-anchor="start" textLength="24.5" lengthAdjust="spacingAndGlyphs" >Wire</text><g transform="translate(62.9,366)">
<path d="M0.7,4 C3,0.5 9,0.5 11.3,4 C9,7.5 3,7.5 0.7,4 Z" fill="#fafafa" stroke="#141414" stroke-width="1.0"/>
<circle cx="5.7" cy="4.3" r="1.95" fill="#141414"/><circle cx="6.6" cy="3.5" r="0.7" fill="#f4f4f4"/>
</g><g transform="translate(82.1,363)">
<path d="M0.8,10 L3.8,9.6 L6.6,4.2 L9.2,13 L13.8,0.8" fill="none" stroke="#2a4a70" stroke-width="2.3" stroke-linejoin="miter"/>
<path d="M0.8,10 L3.8,9.6 L6.6,4.2 L9.2,13 L13.8,0.8" fill="none" stroke="#5d84b6" stroke-width="0.9" stroke-linejoin="miter"/>
</g><text x="103.5" y="375.1" font-size="12.4" fill="#000" font-weight="normal" text-anchor="start" textLength="22" lengthAdjust="spacingAndGlyphs" >Line</text><path d="M0,554.5 H459.5 V619" fill="none" stroke="#d2d2d2" stroke-width="1"/>
</svg>
</body></html>
